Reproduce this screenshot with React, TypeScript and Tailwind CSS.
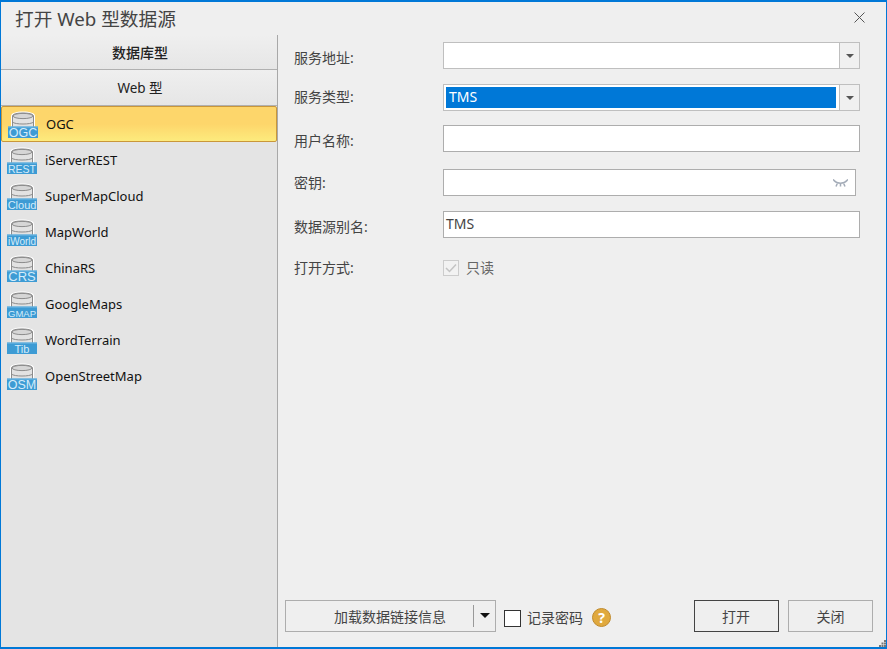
const FONT = "font-['Noto_Sans','Noto_Sans_CJK_SC',sans-serif]";

const LABEL_SIZE: Record<string, number> = {
  OGC: 12.5,
  REST: 10.5,
  Cloud: 11,
  iWorld: 10,
  CRS: 13,
  GMAP: 9.5,
  Tib: 11,
  OSM: 12.5,
};

function DbIcon({ label }: { label: string }) {
  return (
    <svg width="30" height="27" viewBox="0 0 30 27" className="shrink-0">
      <path d="M3 5C3 2 8 .5 15 .5S27 2 27 5v12H3Z" fill="#fff" />
      <path d="M4.500 5C4.500 3 9 2 15 2s10.500 1 10.500 3v12h-21Z" fill="#e2e2e2" stroke="#8c8c8c" />
      <ellipse cx="15" cy="5" rx="10" ry="2.600" fill="#d6d6d6" stroke="#8c8c8c" />
      <path d="M4.500 11c2 2.700 19 2.700 21 0" fill="none" stroke="#8c8c8c" />
      <rect x="0" y="15.500" width="30" height="11.500" fill="#3d9bd4" />
      <path d="M0 16h30" stroke="#79bbe3" />
      <text
        x="15"
        y="25.500"
        textAnchor="middle"
        fill="#d5ecfa"
        fontSize={LABEL_SIZE[label]}
        fontFamily="Liberation Sans, sans-serif"
      >
        {label}
      </text>
    </svg>
  );
}

function Caret({ color = "#555", w = 8 }: { color?: string; w?: number }) {
  return (
    <svg width={w} height={w / 2} viewBox="0 0 10 5" preserveAspectRatio="none">
      <path d="M0 0h10L5 5Z" fill={color} />
    </svg>
  );
}

const items = [
  ["iServerREST", "REST"],
  ["SuperMapCloud", "Cloud"],
  ["MapWorld", "iWorld"],
  ["ChinaRS", "CRS"],
  ["GoogleMaps", "GMAP"],
  ["WordTerrain", "Tib"],
  ["OpenStreetMap", "OSM"],
];

function Row({ label, mt, pt, children }: { label: string; mt: string; pt: string; children: React.ReactNode }) {
  return (
    <div className={`flex items-start h-[27px] ${mt}`}>
      <div className={`w-[149px] shrink-0 text-[14px] leading-[20px] text-[#444] ${pt}`}>{label}</div>
      {children}
    </div>
  );
}

function Combo({ selected }: { selected?: boolean }) {
  return (
    <div className="flex h-[27px] w-[417px] border border-[#bfbfbf] bg-white">
      <div className="flex-1 p-[2px] pr-[3px]">
        {selected && (
          <div className="h-[21px] bg-[#0078d7] pl-[3px] text-[14px] leading-[20px] text-white">TMS</div>
        )}
      </div>
      <div className="flex w-[20px] items-center justify-center border-l border-[#bfbfbf] bg-[#f0f0f0]">
        <Caret />
      </div>
    </div>
  );
}

export default function App() {
  return (
    <div className={`${FONT} relative flex h-[649px] w-[887px] flex-col overflow-hidden border-x border-b-2 border-t-2 border-[#0078d7] bg-[#efefef]`}>
      <div className="flex h-[33px] shrink-0 items-center justify-between pl-[14px] pr-[21px]">
        <span className="text-[18.700px] leading-[33px] text-[#444]">打开 Web 型数据源</span>
        <svg width="11" height="11" viewBox="0 0 11 11" className="mb-[3px]">
          <path d="M.5.5l10 10M10.500.5l-10 10" stroke="#555" fill="none" />
        </svg>
      </div>
      <div className="flex min-h-0 flex-1">
        <div className="flex w-[277px] shrink-0 flex-col border-r border-[#a8a8a8] bg-[#e4e4e4]">
          <div className="flex h-[35px] shrink-0 items-center justify-center border-b border-[#b0b0b0] bg-gradient-to-b from-[#efefef] to-[#e6e6e6] pl-[2px] text-[14px] font-medium text-[#222]">
            数据库型
          </div>
          <div className="flex h-[36px] shrink-0 items-center justify-center border-b border-[#b0b0b0] bg-gradient-to-b from-[#efefef] to-[#e6e6e6] pl-[2px] pt-[2px] text-[13.500px] text-[#222]">
            Web 型
          </div>
          <div className="flex h-[36px] shrink-0 items-center gap-[8px] rounded-[2px] border border-[#c9973a] bg-gradient-to-b from-[#fdd66b] via-[#fdd66b] to-[#fdeb7d] pl-[6px] text-[13px] text-[#111]">
            <DbIcon label="OGC" />
            <span className="pt-[2px]">OGC</span>
          </div>
          {items.map(([name, label]) => (
            <div key={name} className="flex h-[36px] shrink-0 items-center gap-[8px] pl-[6px] text-[13px] text-[#111]">
              <DbIcon label={label} />
              <span className="pt-[2px]">{name}</span>
            </div>
          ))}
        </div>
        <div className="flex min-w-0 flex-1 flex-col pl-[16px]">
          <Row label="服务地址:" mt="mt-[7px]" pt="pt-[6px]">
            <Combo />
          </Row>
          <Row label="服务类型:" mt="mt-[15px]" pt="pt-[3px]">
            <Combo selected />
          </Row>
          <Row label="用户名称:" mt="mt-[14px]" pt="pt-[6px]">
            <div className="h-[27px] w-[417px] border border-[#adadad] bg-white" />
          </Row>
          <Row label="密钥:" mt="mt-[17px]" pt="pt-[4px]">
            <div className="flex h-[27px] w-[413px] items-center justify-end border border-[#adadad] bg-white pr-[7px]">
              <svg width="15" height="8" viewBox="0 0 15 8">
                <path d="M1 1.500c3 3.500 10 3.500 13 0M0 .5l3 2.500M15 .5l-3 2.500M4.500 4L3 7.500M10.500 4L12 7.500M7.500 5v2.500" stroke="#a4acb8" strokeWidth="1.500" fill="none" />
              </svg>
            </div>
          </Row>
          <Row label="数据源别名:" mt="mt-[15px]" pt="pt-[6px]">
            <div className="h-[27px] w-[417px] border border-[#adadad] bg-white pl-[2px] text-[14px] leading-[24px] text-[#444]">
              TMS
            </div>
          </Row>
          <Row label="打开方式:" mt="mt-[17px]" pt="pt-[3px]">
            <div className="flex h-[25px] items-center gap-[7px]">
              <div className="flex h-[16px] w-[16px] items-center justify-center border border-[#ccc] bg-[#f2f2f2]">
                <svg width="12" height="10" viewBox="0 0 12 10">
                  <path d="M1 5l3.500 3.500L11 1.500" stroke="#c4c4c4" strokeWidth="1.500" fill="none" />
                </svg>
              </div>
              <span className="text-[14px] text-[#666]">只读</span>
            </div>
          </Row>
          <div className="mt-auto mb-[15px] flex items-center">
            <div className="ml-[-9px] flex h-[32px] w-[211px] items-center border border-[#adadad] bg-[#efefef] text-[14px] text-[#444]">
              <div className="flex-1 pl-[21px] pt-[1px] text-center">加载数据链接信息</div>
              <div className="h-[22px] w-px bg-[#999]" />
              <div className="flex w-[21px] items-center justify-center pb-[2px]">
                <Caret color="#111" w={10} />
              </div>
            </div>
            <div className="ml-[8px] mt-[4px] h-[17px] w-[17px] border border-[#333] bg-white" />
            <span className="ml-[6px] mt-[3px] text-[14px] text-[#444]">记录密码</span>
            <div className="ml-[9px] mt-[3px] flex h-[19px] w-[19px] items-center justify-center rounded-full border border-[#c08a2c] bg-[#e0a93e] text-[14px] font-bold leading-none text-white">
              ?
            </div>
            <div className="ml-[83px] flex h-[32px] w-[85px] items-center justify-center border border-[#444] pr-[1px] pt-[1px] text-[14px] text-[#444]">打开</div>
            <div className="ml-[9px] flex h-[32px] w-[85px] items-center justify-center border border-[#adadad] pt-[1px] text-[14px] text-[#444]">关闭</div>
          </div>
        </div>
      </div>
      <svg width="7" height="7" viewBox="0 0 7 7" className="absolute bottom-0 right-0">
        <path d="M5 0h2v2H5zM2.500 2.500h2v2h-2zM5 2.500h2v2H5zM0 5h2v2H0zM2.500 5h2v2h-2zM5 5h2v2H5z" fill="#777" />
      </svg>
    </div>
  );
}
